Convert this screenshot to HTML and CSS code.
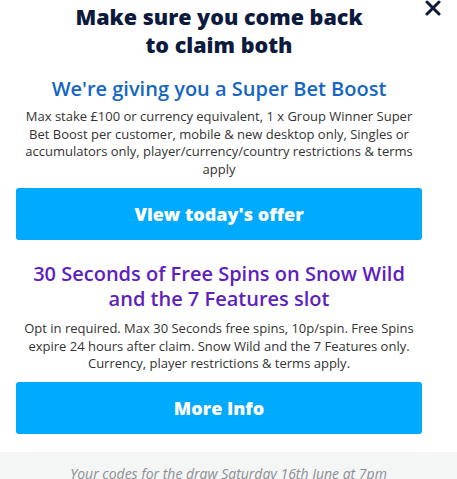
FILE: index.html
```html
<!DOCTYPE html>
<html>
<head>
<meta charset="utf-8">
<link rel="stylesheet" href="styles.css">
</head>
<body>
<div class="modal">
  <button class="close" aria-label="Close">
    <svg width="16" height="16" viewBox="0 0 16 16"><path d="M2 2L14 14M14 2L2 14" stroke="#0c1a3d" stroke-width="3" stroke-linecap="round"/></svg>
  </button>
  <div class="content">
    <h1 class="title">Make sure you come back<br>to claim both</h1>
    <section class="offer">
      <h2 class="offer-title blue">We're giving you a Super Bet Boost</h2>
      <p class="terms">Max stake £100 or currency equivalent, 1 x Group Winner Super Bet Boost per customer, mobile &amp; new desktop only, Singles or accumulators only, player/currency/country restrictions &amp; terms apply</p>
      <a class="btn">View today's offer</a>
    </section>
    <section class="offer second">
      <h2 class="offer-title purple">30 Seconds of Free Spins on Snow Wild and the 7 Features slot</h2>
      <p class="terms">Opt in required. Max 30 Seconds free spins, 10p/spin. Free Spins expire 24 hours after claim. Snow Wild and the 7 Features only. Currency, player restrictions &amp; terms apply.</p>
      <a class="btn">More Info</a>
    </section>
  </div>
  <div class="footer">Your codes for the draw Saturday 16th June at 7pm</div>
</div>
</body>
</html>
```
FILE: styles.css
```css
html, body { margin: 0; padding: 0; background: #fff; }
body { font-family: "Open Sans", "Liberation Sans", sans-serif; width: 457px; height: 479px; overflow: hidden; }
.modal { position: relative; background: #fff; }
.close { position: absolute; top: 0; right: 16px; border: 0; background: none; padding: 0; width: 16px; height: 16px; }
.close svg { display: block; }
.content { padding: 3px 35px 0 16px; display: flex; flex-direction: column; }
.title { margin: 0; text-align: center; font-size: 21.5px; line-height: 28px; font-weight: 800; color: #0c1a3d; }
.offer { display: flex; flex-direction: column; align-items: stretch; }
.offer-title { margin: 17px 0 0; text-align: center; font-weight: 600; font-size: 20px; line-height: 25px; }
.blue { color: #1566c4; }
.purple { color: #5d1fbf; }
.second .offer-title { margin-top: 21px; }
.terms { margin: 7px 0 0; text-align: center; font-size: 13px; line-height: 17.5px; color: #333; padding: 0 4px; }
.second .terms { margin-top: 9px; }
.btn { display: flex; align-items: center; justify-content: center; height: 52px; margin-top: 10px; background: #00aaff; color: #fff; font-weight: 800; font-size: 18px; border-radius: 3px; }
.second .btn { margin-top: 9px; }
.footer { margin-top: 18px; background: #f4f5f5; height: 40px; padding-top: 12px; box-sizing: border-box; text-align: center; font-style: italic; font-size: 14px; color: #8a8f94; }
```
